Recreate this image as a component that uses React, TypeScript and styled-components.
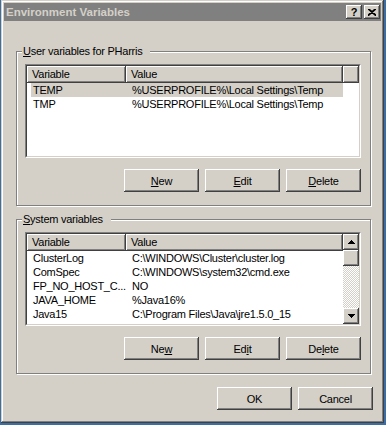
import * as React from "react";
import styled, { createGlobalStyle } from "styled-components";

type Variable = { name: string; value: string };

const userVariables: Variable[] = [
    { name: "TEMP", value: "%USERPROFILE%\\Local Settings\\Temp" },
    { name: "TMP", value: "%USERPROFILE%\\Local Settings\\Temp" },
];

const systemVariables: Variable[] = [
    { name: "ClusterLog", value: "C:\\WINDOWS\\Cluster\\cluster.log" },
    { name: "ComSpec", value: "C:\\WINDOWS\\system32\\cmd.exe" },
    { name: "FP_NO_HOST_C...", value: "NO" },
    { name: "JAVA_HOME", value: "%Java16%" },
    { name: "Java15", value: "C:\\Program Files\\Java\\jre1.5.0_15" },
    { name: "Java16", value: "C:\\Program Files\\Java\\jdk1.6.0_07" },
];

const GlobalStyle = createGlobalStyle`
    html, body {
        margin: 0;
        padding: 0;
        background: #3a6ea5;
    }
    body {
        font-family: "Liberation Sans", Arial, sans-serif;
        font-size: 11px;
        letter-spacing: -0.25px;
        color: #000;
    }
`;

// classic 3D edges
const raised = `box-shadow: inset -1px -1px #404040, inset 1px 1px #fff, inset -2px -2px #808080, inset 2px 2px #d4d0c8;`;

const Window = styled.div`
    box-sizing: border-box;
    width: 383px;
    height: 423px;
    margin-left: 1px;
    padding: 3px;
    background: #d4d0c8;
    box-shadow: inset -1px -1px #404040, inset 1px 1px #d4d0c8, inset -2px -2px #808080, inset 2px 2px #fff;
    display: flex;
    flex-direction: column;
`;

const TitleBar = styled.div`
    height: 18px;
    background: #808080;
    display: flex;
    align-items: center;
    padding: 0 1px 0 2px;
    gap: 2px;
`;

const Title = styled.div`
    flex: 1;
    color: #d4d0c8;
    font-weight: bold;
    font-size: 11.5px;
    letter-spacing: 0;
    white-space: nowrap;
`;

const CaptionButton = styled.div`
    box-sizing: border-box;
    width: 16px;
    height: 14px;
    background: #d4d0c8;
    ${raised}
    display: flex;
    align-items: center;
    justify-content: center;
    font-weight: bold;
    font-size: 11px;
    line-height: 14px;
`;

const GroupBox = styled.fieldset<{ $top: number }>`
    margin: ${(p) => p.$top}px 10px 0 12px;
    padding: 0 9px 13px 8px;
    border: 1px solid #808080;
    box-shadow: inset 1px 1px #fff, 1px 1px #fff;
    min-width: 0;
`;

const GroupLabel = styled.legend`
    margin-left: -3px;
    padding: 0 8px 0 1px;
    line-height: 13px;
    background: #d4d0c8;
`;

const ListFrame = styled.div`
    box-sizing: border-box;
    height: 94px;
    margin-top: 6px;
    border: 1px solid;
    border-color: #808080 #fff #fff #808080;
`;

const ListInner = styled.div`
    box-sizing: border-box;
    height: 100%;
    border: 1px solid;
    border-color: #404040 #d4d0c8 #d4d0c8 #404040;
    background: #fff;
    display: flex;
    overflow: hidden;
`;

const ListBody = styled.div`
    flex: 1;
    min-width: 0;
    display: flex;
    flex-direction: column;
    overflow: hidden;
`;

const Header = styled.div`
    display: flex;
    height: 17px;
    flex-shrink: 0;
`;

const HeaderCell = styled.div<{ $width?: number }>`
    box-sizing: border-box;
    ${(p) => (p.$width ? `width: ${p.$width}px;` : "flex: 1;")}
    flex-shrink: 0;
    padding-left: 5px;
    line-height: 17px;
    background: #d4d0c8;
    box-shadow: inset -1px -1px #404040, inset 1px 1px #fff, inset -2px -2px #808080;
    white-space: nowrap;
`;

const Row = styled.div<{ $selected?: boolean }>`
    display: flex;
    width: 312px;
    height: 14px;
    margin-left: 4px;
    flex-shrink: 0;
    line-height: 14px;
    background: ${(p) => (p.$selected ? "#d4d0c8" : "transparent")};
`;

const Cell = styled.div<{ $width: number; $pad: number }>`
    box-sizing: border-box;
    width: ${(p) => p.$width}px;
    padding-left: ${(p) => p.$pad}px;
    white-space: nowrap;
    overflow: hidden;
`;

const ScrollBar = styled.div`
    width: 16px;
    flex-shrink: 0;
    display: flex;
    flex-direction: column;
`;

const ScrollButton = styled.div`
    box-sizing: border-box;
    width: 16px;
    height: 16px;
    flex-shrink: 0;
    background: #d4d0c8;
    ${raised}
    display: flex;
    align-items: center;
    justify-content: center;
`;

const ScrollTrack = styled.div`
    flex: 1;
    background-image: repeating-conic-gradient(#fff 0% 25%, #d4d0c8 0% 50%);
    background-size: 2px 2px;
`;

const ButtonRow = styled.div<{ $top: number; $right?: number }>`
    display: flex;
    justify-content: flex-end;
    gap: 6px;
    margin-top: ${(p) => p.$top}px;
    margin-right: ${(p) => p.$right ?? 0}px;
`;

const PushButton = styled.div`
    box-sizing: border-box;
    width: 75px;
    height: 23px;
    background: #d4d0c8;
    ${raised}
    display: flex;
    align-items: center;
    justify-content: center;
    font-size: 11px;
    u {
        text-decoration-thickness: 1px;
        text-underline-offset: 1px;
    }
`;

const Arrow = ({ up }: { up?: boolean }) => (
    <svg width="7" height="4" viewBox="0 0 7 4">
        <path d={up ? "M3.5 0 L7 4 L0 4 Z" : "M0 0 L7 0 L3.5 4 Z"} fill="#000" shapeRendering="crispEdges" />
    </svg>
);

const VariableList = ({ items, scroll, selected }: { items: Variable[]; scroll?: boolean; selected?: number }) => (
    <ListFrame>
        <ListInner>
            <ListBody>
                <Header>
                    <HeaderCell $width={99}>Variable</HeaderCell>
                    <HeaderCell $width={217}>Value</HeaderCell>
                    {!scroll && <HeaderCell />}
                </Header>
                {items.map((v, i) => (
                    <Row key={v.name} $selected={i === selected}>
                        <Cell $width={95} $pad={2}>
                            {v.name}
                        </Cell>
                        <Cell $width={217} $pad={6}>
                            {v.value}
                        </Cell>
                    </Row>
                ))}
            </ListBody>
            {scroll && (
                <ScrollBar>
                    <ScrollButton>
                        <Arrow up />
                    </ScrollButton>
                    <ScrollButton />
                    <ScrollTrack />
                    <ScrollButton>
                        <Arrow />
                    </ScrollButton>
                </ScrollBar>
            )}
        </ListInner>
    </ListFrame>
);

export default function App() {
    return (
        <>
            <GlobalStyle />
            <Window>
                <TitleBar>
                    <Title>Environment Variables</Title>
                    <CaptionButton>?</CaptionButton>
                    <CaptionButton>
                        <svg width="8" height="7" viewBox="0 0 8 7">
                            <path d="M0 0 L8 7 M1 0 L8 6 M8 0 L0 7 M7 0 L0 6" stroke="#000" strokeWidth="1.2" />
                        </svg>
                    </CaptionButton>
                </TitleBar>

                <GroupBox $top={24}>
                    <GroupLabel>
                        <u>U</u>ser variables for PHarris
                    </GroupLabel>
                    <VariableList items={userVariables} selected={0} />
                    <ButtonRow $top={11}>
                        <PushButton>
                            <span>
                                <u>N</u>ew
                            </span>
                        </PushButton>
                        <PushButton>
                            <span>
                                <u>E</u>dit
                            </span>
                        </PushButton>
                        <PushButton>
                            <span>
                                <u>D</u>elete
                            </span>
                        </PushButton>
                    </ButtonRow>
                </GroupBox>

                <GroupBox $top={7}>
                    <GroupLabel>
                        <u>S</u>ystem variables
                    </GroupLabel>
                    <VariableList items={systemVariables} scroll />
                    <ButtonRow $top={11}>
                        <PushButton>
                            <span>
                                Ne<u>w</u>
                            </span>
                        </PushButton>
                        <PushButton>
                            <span>
                                Ed<u>i</u>t
                            </span>
                        </PushButton>
                        <PushButton>
                            <span>
                                De<u>l</u>ete
                            </span>
                        </PushButton>
                    </ButtonRow>
                </GroupBox>

                <ButtonRow $top={13} $right={8}>
                    <PushButton>OK</PushButton>
                    <PushButton>Cancel</PushButton>
                </ButtonRow>
            </Window>
        </>
    );
}
